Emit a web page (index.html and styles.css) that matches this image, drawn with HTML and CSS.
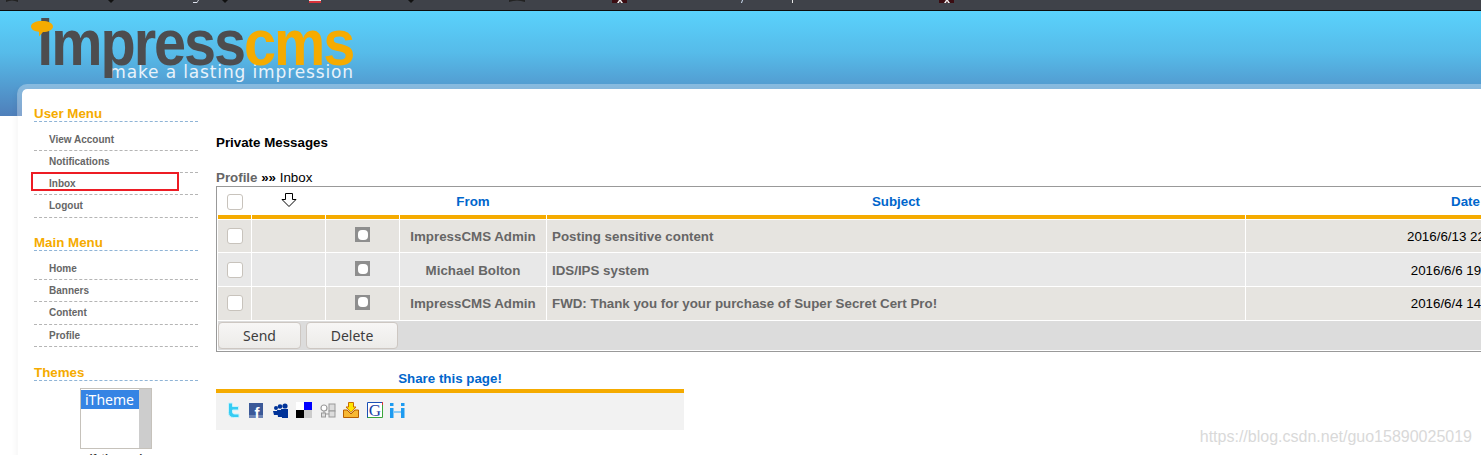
FILE: index.html
```html
<!DOCTYPE html>
<html lang="en">
<head>
    <meta charset="UTF-8">
    <meta name="viewport" content="width=device-width, initial-scale=1.0">
    <title>Private Messages</title>
    <link rel="stylesheet" href="styles.css">
</head>
<body>
    <svg class="topbar" width="1481" height="11" viewBox="0 0 1481 11">
        <rect width="1481" height="10" fill="#3f4249"/>
        <rect y="10" width="1481" height="1" fill="#0c0c0c"/>
        <path d="M6 2 Q12 -1 18 2 V0 H6 Z" fill="#222"/>
        <path d="M108 0 H114 L111 3 Z" fill="#111"/>
        <path d="M193 2 H197 L198 0 H199 L197 3 H193 Z" fill="#dfe3ee"/>
        <path d="M222 0 H228 L225 3 Z" fill="#111"/>
        <rect x="309" width="12" height="1" fill="#e8e8e8"/>
        <rect x="309" y="1" width="12" height="2" fill="#d8323a"/>
        <path d="M408 0 H414 L411 3 Z" fill="#111"/>
        <path d="M509 2 Q517 -1 525 2 V0 H509 Z" fill="#222"/>
        <rect x="612" width="15" height="3" fill="#3b0d12"/>
        <path d="M617 3 L619 0 H621 L623 3 H621 L620 1 L619 3 Z" fill="#eee"/>
        <path d="M741 3 L742 0 H743 L742 3 Z" fill="#cfe0f5"/>
        <rect x="792" width="1" height="3" fill="#e8e8e8"/>
        <rect x="939" width="15" height="3" fill="#3b0d12"/>
        <path d="M944 3 L946 0 H948 L950 3 H948 L947 1 L946 3 Z" fill="#eee"/>
    </svg>

    <div class="site">
        <div class="header">
            <div class="logo">
                <svg class="logo-bubble" width="22" height="16" viewBox="0 0 22 16">
                    <path d="M11 0 C17 0 22 2 22 5.500 C22 9 17 11 12 11 L8 15.500 L8 10.800 C3.500 10.500 0 8.500 0 5.500 C0 2 5 0 11 0 Z" fill="#f5ab00"/>
                </svg>
                <div class="logo-name">impress<span class="logo-cms">cms</span></div>
                <div class="logo-slogan">make a lasting impression</div>
            </div>
        </div>

        <div class="shell">
            <div class="sidebar">
                <div class="menu-block">
                    <div class="menu-title">User Menu</div>
                    <ul class="menu-list">
                        <li><a href="#">View Account</a></li>
                        <li><a href="#">Notifications</a></li>
                        <li class="marked"><a href="#">Inbox</a></li>
                        <li><a href="#">Logout</a></li>
                    </ul>
                </div>
                <div class="menu-block">
                    <div class="menu-title">Main Menu</div>
                    <ul class="menu-list">
                        <li><a href="#">Home</a></li>
                        <li><a href="#">Banners</a></li>
                        <li><a href="#">Content</a></li>
                        <li><a href="#">Profile</a></li>
                    </ul>
                </div>
                <div class="menu-block">
                    <div class="menu-title">Themes</div>
                    <div class="theme-select">
                        <div class="theme-options">
                            <div class="theme-option">iTheme</div>
                        </div>
                        <div class="theme-scroll"></div>
                    </div>
                    <div class="theme-count">(1 themes)</div>
                </div>
            </div>

            <div class="content">
                <h1 class="page-title">Private Messages</h1>
                <div class="breadcrumb"><a href="#">Profile</a> <b>»»</b> Inbox</div>

                <table class="messages">
                    <colgroup>
                        <col class="col-check">
                        <col class="col-arrow">
                        <col class="col-icon">
                        <col class="col-from">
                        <col class="col-subject">
                        <col class="col-date">
                    </colgroup>
                    <thead>
                        <tr>
                            <th><input class="check" type="checkbox"></th>
                            <th>
                                <svg class="sort-arrow" width="16" height="15" viewBox="0 0 16 15">
                                    <path d="M4.500 0.500 H11.500 V6.500 H15 L8 13.500 L1 6.500 H4.500 Z" fill="#fff" stroke="#000" stroke-width="1"/>
                                </svg>
                            </th>
                            <th></th>
                            <th><a href="#">From</a></th>
                            <th><a href="#">Subject</a></th>
                            <th><a href="#">Date</a></th>
                        </tr>
                    </thead>
                    <tbody>
                        <tr class="odd">
                            <td class="center"><input class="check" type="checkbox"></td>
                            <td></td>
                            <td class="center"><span class="read-icon"></span></td>
                            <td class="center strong">ImpressCMS Admin</td>
                            <td class="strong">Posting sensitive content</td>
                            <td class="center">2016/6/13 22:03:23</td>
                        </tr>
                        <tr class="even">
                            <td class="center"><input class="check" type="checkbox"></td>
                            <td></td>
                            <td class="center"><span class="read-icon"></span></td>
                            <td class="center strong">Michael Bolton</td>
                            <td class="strong">IDS/IPS system</td>
                            <td class="center">2016/6/6 19:15:07</td>
                        </tr>
                        <tr class="odd">
                            <td class="center"><input class="check" type="checkbox"></td>
                            <td></td>
                            <td class="center"><span class="read-icon"></span></td>
                            <td class="center strong">ImpressCMS Admin</td>
                            <td class="strong">FWD: Thank you for your purchase of Super Secret Cert Pro!</td>
                            <td class="center">2016/6/4 14:38:50</td>
                        </tr>
                    </tbody>
                    <tfoot>
                        <tr>
                            <td colspan="6">
                                <div class="actions">
                                    <button class="send-button">Send</button>
                                    <button class="delete-button">Delete</button>
                                </div>
                            </td>
                        </tr>
                    </tfoot>
                </table>

                <div class="share">
                    <div class="share-title"><a href="#">Share this page!</a></div>
                    <div class="share-icons">
                        <svg width="16" height="16" viewBox="0 0 16 16">
                            <path d="M2.500 1 H6.500 V4.500 H12.500 V8 H6.500 V10 Q6.500 12 8.500 12 H13 V15.500 H7.500 Q2.500 15.500 2.500 10.500 Z" fill="#35ccf3" stroke="#c8f2fc" stroke-width="1"/>
                        </svg>
                        <svg width="16" height="15" viewBox="0 0 16 15">
                            <rect width="14" height="15" fill="#3b5998"/>
                            <rect y="12" width="14" height="3" fill="#6d84b4"/>
                            <text class="icon-f" x="5.500" y="14.500">f</text>
                        </svg>
                        <svg width="16" height="15" viewBox="0 0 16 15">
                            <circle cx="3" cy="5" r="2" fill="#003399"/>
                            <circle cx="7" cy="3.500" r="2.300" fill="#003399"/>
                            <circle cx="12" cy="3" r="2.600" fill="#003399"/>
                            <path d="M0 8 H5 V12 H1 Z M4 7 H9 V14 H5 Z M8 6 H15 V15 H9 Z" fill="#003399"/>
                        </svg>
                        <svg width="16" height="16" viewBox="0 0 16 16">
                            <rect width="8" height="8" fill="#fff"/>
                            <rect x="8" width="8" height="8" fill="#0000ff"/>
                            <rect y="8" width="8" height="8" fill="#000"/>
                            <rect x="8" y="8" width="8" height="8" fill="#ccc"/>
                        </svg>
                        <svg width="16" height="15" viewBox="0 0 16 15">
                            <circle cx="4" cy="5" r="3" fill="#fff" stroke="#999" stroke-width="1.200"/>
                            <rect x="9" y="1" width="6" height="7" fill="#ddd" stroke="#999"/>
                            <rect x="1.500" y="10" width="4" height="4" fill="#ddd" stroke="#999"/>
                            <rect x="9" y="8" width="6" height="6" fill="#ddd" stroke="#999"/>
                            <path d="M4 8 V10 M6 11 H9" stroke="#999" fill="none"/>
                        </svg>
                        <svg width="16" height="16" viewBox="0 0 16 16">
                            <path d="M0.500 8 H4 L8 12 L12 8 H15.500 V15.500 H0.500 Z" fill="#f7b733" stroke="#b85f00"/>
                            <path d="M5.500 0.500 H10.500 V5 H13 L8 10.500 L3 5 H5.500 Z" fill="#ffe500" stroke="#c96a00"/>
                        </svg>
                        <svg width="16" height="16" viewBox="0 0 16 16">
                            <rect width="16" height="16" fill="#fff"/>
                            <path d="M0.500 16 V0.500 H15.500" fill="none" stroke="#1a4fb5"/>
                            <path d="M0.500 15.500 H15.500 V3" fill="none" stroke="#3aa53a"/>
                            <path d="M15.500 0 V3" fill="none" stroke="#d8323a"/>
                            <text class="icon-g" x="8" y="13.500">G</text>
                        </svg>
                        <svg width="16" height="15" viewBox="0 0 16 15">
                            <rect x="0" y="0" width="3.500" height="3" fill="#1e9bf0"/>
                            <rect x="11" y="0" width="3.500" height="3" fill="#1e9bf0"/>
                            <rect x="0" y="5" width="3.500" height="10" fill="#1e9bf0"/>
                            <rect x="11" y="5" width="3.500" height="10" fill="#1e9bf0"/>
                            <rect x="3.500" y="8" width="7.500" height="2" fill="#8ccbf5"/>
                        </svg>
                    </div>
                </div>
            </div>
        </div>
    </div>

    <div class="watermark">https://blog.csdn.net/guo15890025019</div>
</body>
</html>
```
FILE: styles.css
```css
html, body {
    height: 455px;
    overflow: hidden;
}

body {
    margin: 0;
    font-family: 'Liberation Sans', Arial, sans-serif;
    font-size: 13.33px;
    line-height: 17px;
    background: #fff;
    color: #000;
}

a {
    text-decoration: none;
}

.topbar {
    display: block;
}

.site {
    background: linear-gradient(180deg, #5ad2fc 0%, #56bbe9 40%, #4f7fba 100%) no-repeat;
    background-size: 100% 105px;
}

/* Header */
.header {
    height: 73px;
    padding-left: 31px;
}

.logo {
    position: relative;
    width: 323px;
    height: 73px;
}

.logo-bubble {
    position: absolute;
    left: 0;
    top: 10px;
    z-index: 1;
}

.logo-name {
    padding: 2px 0 0 7px;
    font-size: 64px;
    line-height: 60px;
    font-weight: bold;
    letter-spacing: -2.250px;
    color: #4d4d4f;
    white-space: nowrap;
    transform: scaleX(0.9);
    transform-origin: left;
}

.logo-cms {
    color: #f5ab00;
}

.logo-slogan {
    margin-top: -10px;
    font-family: 'DejaVu Sans', sans-serif;
    font-size: 17px;
    line-height: 18px;
    letter-spacing: 0.870px;
    color: #e8f2fa;
    text-align: right;
    white-space: nowrap;
}

/* Panel */
.shell {
    display: flex;
    margin-left: 17px;
    background: #fff;
    background-clip: padding-box;
    border: 5px solid rgba(255, 255, 255, 0.3);
    border-right: none;
    border-bottom: none;
    border-radius: 10px 0 0 0;
    box-shadow: -6px 0 6px -6px rgba(0, 0, 0, 0.06);
}

.sidebar {
    flex: 0 0 164px;
    margin-left: 12px;
    padding-top: 16px;
}

.menu-block {
    margin-bottom: 16.500px;
}

.menu-title {
    height: 16px;
    font-size: 13.33px;
    line-height: 17px;
    font-weight: bold;
    color: #f5ab00;
    border-bottom: 1px dashed #8fb4d6;
}

.menu-list {
    list-style: none;
    margin: 0;
    padding: 6.500px 0 0;
}

.menu-list li {
    position: relative;
    box-sizing: border-box;
    height: 22.330px;
    padding-left: 15px;
    border-bottom: 1px dashed #b5b5b5;
    font-size: 10px;
    line-height: 22px;
    font-weight: bold;
}

.menu-list a {
    color: #666;
}

/* red annotation around the inbox link */
.menu-list .marked::after {
    content: "";
    position: absolute;
    left: -3px;
    top: -1px;
    width: 144px;
    height: 15px;
    border: 2px solid #ed1c24;
}

.theme-select {
    display: flex;
    box-sizing: border-box;
    width: 72px;
    height: 61px;
    margin: 7px 0 0 46px;
    border: 1px solid #c6c2bb;
    background: #fff;
}

.theme-options {
    flex: 1;
    padding: 1px 0 0 0;
}

.theme-option {
    height: 19px;
    padding-left: 4px;
    font-family: 'Noto Sans', sans-serif;
    font-size: 14px;
    line-height: 19px;
    color: #fff;
    background: #3584e4;
}

.theme-scroll {
    flex: 0 0 12px;
    background: #cdcdcd;
}

.theme-count {
    margin-top: 3px;
    margin-left: 46px;
    width: 72px;
    font-size: 11px;
    line-height: 13px;
    font-weight: bold;
    text-align: center;
    color: #333;
    white-space: nowrap;
}

/* Content */
.content {
    flex: 1;
    min-width: 0;
    margin-left: 18px;
    padding-top: 45px;
}

.page-title {
    margin: 0;
    font-size: 13.33px;
    line-height: 17px;
    font-weight: bold;
}

.breadcrumb {
    margin-top: 18px;
}

.breadcrumb a {
    color: #666;
    font-weight: bold;
}

.messages {
    table-layout: fixed;
    width: 1469px;
    font-size: 13.33px;
    border: 1px solid #999;
    border-collapse: separate;
    border-spacing: 1px;
}

.col-check { width: 33px; }
.col-arrow { width: 73px; }
.col-icon { width: 73px; }
.col-from { width: 146px; }
.col-subject { width: 698px; }

.messages th {
    height: 27px;
    padding: 0;
    border-bottom: 4px solid #f5ab00;
    text-align: center;
    vertical-align: middle;
}

.messages th:last-child {
    padding-left: 2px;
}

.messages th a {
    color: #0066cc;
    font-weight: bold;
}

.messages td {
    padding: 0 5px;
    vertical-align: middle;
}

.messages tbody tr {
    height: 33px;
}

.messages tbody tr:first-child {
    height: 32px;
}

.odd td {
    background: #e6e4e0;
}

.even td {
    padding-top: 1px;
    background: #e8e8e8;
}

.messages .center {
    text-align: center;
}

.messages .strong {
    font-weight: bold;
    color: #666;
}

.check {
    appearance: none;
    display: block;
    box-sizing: border-box;
    width: 16px;
    height: 16px;
    margin: 0 auto;
    background: #fff;
    border: 1px solid #c8c3bc;
    border-radius: 3px;
}

tbody .check {
    margin-top: -1px;
}

.sort-arrow {
    display: block;
    margin: -2px auto 0;
}

.read-icon {
    position: relative;
    display: block;
    width: 15px;
    height: 15px;
    margin: -3px auto 0;
    background: #8e8e8e;
}

.read-icon::after {
    content: "";
    position: absolute;
    left: 2.500px;
    top: 2.500px;
    width: 10px;
    height: 10px;
    border-radius: 40%;
    background: #fff;
}

.messages tfoot td {
    padding: 0;
    background: #dcdcdc;
}

.actions {
    display: flex;
    gap: 5px;
    height: 29px;
    padding-top: 1px;
    box-sizing: border-box;
}

.actions button {
    height: 27px;
    padding: 0;
    font-family: 'Noto Sans', sans-serif;
    font-size: 14px;
    color: #3d3d3d;
    background: linear-gradient(180deg, #f7f6f5, #ecebe9);
    border: 1px solid #cdc7c2;
    border-radius: 4px;
}

.send-button {
    width: 83px;
}

.delete-button {
    width: 92px;
}

/* Share box */
.share {
    width: 468px;
    margin-top: 18px;
}

.share-title {
    text-align: center;
    line-height: 17px;
}

.share-title a {
    color: #0066cc;
    font-weight: bold;
}

.share-icons {
    display: flex;
    align-items: center;
    gap: 7.500px;
    height: 41px;
    margin-top: 2px;
    padding: 0 0 3px 9.500px;
    box-sizing: border-box;
    background: #f2f2f2;
    border-top: 4px solid #f5ab00;
}

.icon-f {
    font-size: 15px;
    font-weight: bold;
    fill: #fff;
}

.icon-g {
    font-family: 'Liberation Serif', serif;
    font-size: 17px;
    fill: #1a3fa5;
    text-anchor: middle;
}

.watermark {
    position: absolute;
    right: 9px;
    top: 428px;
    font-size: 16px;
    line-height: 17px;
    color: #d9d9d9;
}
```
